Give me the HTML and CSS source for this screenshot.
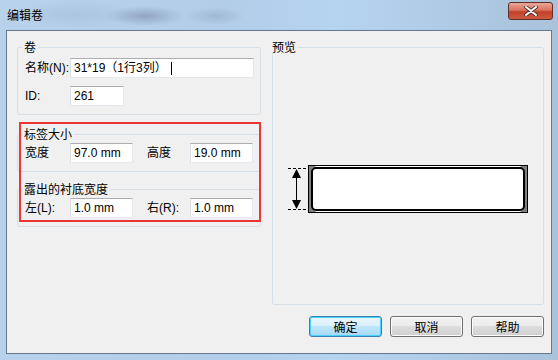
FILE: index.html
```html
<!DOCTYPE html>
<html lang="zh-CN">
<head>
    <meta charset="UTF-8">
    <title>编辑卷</title>
    <link rel="stylesheet" href="styles.css">
</head>
<body>
    <div class="window">
        <div class="titlebar">
            <span class="title">编辑卷</span>
            <div class="close-btn">
                <svg width="14" height="10" viewBox="0 0 14 10">
                    <path d="M2 1 L12 9 M12 1 L2 9" stroke="#4a2a26" stroke-width="3.6" stroke-linecap="round"/>
                    <path d="M2 1 L12 9 M12 1 L2 9" stroke="#ffffff" stroke-width="2" stroke-linecap="round"/>
                </svg>
            </div>
        </div>
        <div class="client">
            <div class="panes">
                <div class="left-col">
                    <fieldset class="group group-roll">
                        <legend>卷</legend>
                        <div class="row">
                            <span class="label">名称(N):</span>
                            <div class="field field-wide">31*19（1行3列）<span class="caret"></span></div>
                        </div>
                        <div class="row">
                            <span class="label">ID:</span>
                            <div class="field field-short">261</div>
                        </div>
                    </fieldset>

                    <div class="marked">
                        <fieldset class="group group-size">
                            <legend>标签大小</legend>
                            <div class="row">
                                <span class="label">宽度</span>
                                <div class="field">97.0 mm</div>
                                <span class="label label-second">高度</span>
                                <div class="field">19.0 mm</div>
                            </div>
                        </fieldset>
                        <fieldset class="group group-size">
                            <legend>露出的衬底宽度</legend>
                            <div class="row">
                                <span class="label">左(L):</span>
                                <div class="field">1.0 mm</div>
                                <span class="label label-second">右(R):</span>
                                <div class="field">1.0 mm</div>
                            </div>
                        </fieldset>
                    </div>
                </div>

                <fieldset class="group preview">
                    <legend>预览</legend>
                    <svg class="preview-svg" width="244" height="52" viewBox="286 163 244 52">
                        <!-- height marker -->
                        <line x1="288" y1="168.5" x2="308" y2="168.5" stroke="#000" stroke-dasharray="3 2"/>
                        <line x1="288" y1="209.5" x2="308" y2="209.5" stroke="#000" stroke-dasharray="3 2"/>
                        <line x1="296.5" y1="176" x2="296.5" y2="201" stroke="#000"/>
                        <polygon points="296.5,169 292,178 301,178" fill="#000"/>
                        <polygon points="296.5,209 292,200 301,200" fill="#000"/>
                        <!-- liner -->
                        <rect x="308.5" y="165.5" width="219" height="47" fill="#ffffff" stroke="#000"/>
                        <rect x="309" y="166" width="3" height="46" fill="#808080"/>
                        <rect x="524" y="166" width="3" height="46" fill="#808080"/>
                        <polygon points="312,166 316,166 312,170" fill="#808080"/>
                        <polygon points="312,212 316,212 312,208" fill="#808080"/>
                        <polygon points="524,166 520,166 524,170" fill="#808080"/>
                        <polygon points="524,212 520,212 524,208" fill="#808080"/>
                        <!-- label -->
                        <rect x="312" y="168" width="212" height="42" rx="4" fill="#ffffff" stroke="#000" stroke-width="2"/>
                    </svg>
                </fieldset>
            </div>

            <div class="buttons">
                <button class="btn btn-default">确定</button>
                <button class="btn">取消</button>
                <button class="btn">帮助</button>
            </div>
        </div>
    </div>
</body>
</html>
```

FILE: styles.css
```css
/* styles.css */
body {
    margin: 0;
    padding: 0;
    font-family: "Liberation Sans", "Noto Sans CJK SC", sans-serif;
    font-size: 12px;
    color: #000;
}

.window {
    width: 558px;
    height: 360px;
    background: linear-gradient(90deg, #b9d2eb 0%, #b3cde8 40%, #b6d3f0 60%, #aac2da 100%);
    box-sizing: border-box;
    display: flex;
    flex-direction: column;
}

.titlebar {
    height: 30px;
    display: flex;
    justify-content: space-between;
    align-items: flex-start;
    background:
        radial-gradient(ellipse 40px 10px at 145px 16px, rgba(80, 90, 110, 0.35), transparent),
        radial-gradient(ellipse 30px 9px at 215px 16px, rgba(110, 120, 140, 0.25), transparent),
        radial-gradient(ellipse 60px 14px at 75px 14px, rgba(140, 160, 185, 0.25), transparent);
}

.title {
    margin: 8px 0 0 7px;
    line-height: 14px;
    font-family: "Noto Sans CJK SC", sans-serif;
}

.close-btn {
    width: 45px;
    height: 18px;
    margin: 2px 5px 0 0;
    box-sizing: border-box;
    border: 1px solid #5b2e26;
    border-radius: 3px;
    background: linear-gradient(180deg, #e9a99a 0%, #d9715d 45%, #c3412a 55%, #cc5a3f 100%);
    display: flex;
    justify-content: center;
    align-items: center;
}

.client {
    flex: 1;
    margin: 0 6px 6px 6px;
    background-color: #f0f0f0;
    border: 1px solid #64798f;
    padding: 10px 7px 0 10px;
    display: flex;
    flex-direction: column;
}

.panes {
    display: flex;
    gap: 11px;
}

.left-col {
    width: 244px;
    display: flex;
    flex-direction: column;
}

.group {
    margin: 0;
    border: 1px solid #d5dfe5;
    border-radius: 3px;
    padding: 5px 6px 8px 7px;
}

.group legend {
    padding: 0 2px;
    margin-left: -3px;
    line-height: 12px;
    font-family: "Noto Sans CJK SC", sans-serif;
}

.group-size {
    padding-top: 3px;
}

.group-roll .row + .row {
    margin-top: 8px;
}

.row {
    display: flex;
    align-items: center;
}

.label {
    width: 45px;
    line-height: 14px;
}

.label-second {
    width: 43px;
    margin-left: 14px;
}

.field {
    width: 63px;
    height: 20px;
    box-sizing: border-box;
    background-color: #fff;
    border: 1px solid #e3e9ef;
    border-top-color: #abadb3;
    border-left-color: #dbdfe6;
    padding: 0 3px;
    line-height: 18px;
    white-space: nowrap;
    display: flex;
    align-items: center;
}

.field-wide {
    width: 184px;
}

.field-short {
    width: 54px;
}

.caret {
    width: 1px;
    height: 13px;
    background-color: #000;
    margin-left: 4px;
}

.marked {
    position: relative;
    margin-top: 13px;
    display: flex;
    flex-direction: column;
}

.marked::after {
    content: "";
    position: absolute;
    left: 2px;
    top: -6px;
    width: 242px;
    height: 100px;
    box-sizing: border-box;
    border: 2px solid #ee3535;
}

.marked .group + .group {
    margin-top: 11px;
}

.preview {
    flex: 1;
    height: 264px;
    box-sizing: border-box;
    padding: 0;
    display: flex;
    justify-content: center;
}

.preview-svg {
    margin-top: 110px;
    display: block;
}

.buttons {
    display: flex;
    justify-content: flex-end;
    gap: 8px;
    margin-top: 11px;
}

.btn {
    width: 73px;
    height: 21px;
    padding: 0;
    font-family: "Noto Sans CJK SC", sans-serif;
    font-size: 12px;
    color: #000;
    border: 1px solid #707070;
    border-radius: 3px;
    background: linear-gradient(180deg, #f2f2f2 0%, #ebebeb 49%, #dddddd 50%, #cfcfcf 100%);
    box-shadow: inset 0 0 0 1px #fcfcfc;
}

.btn-default {
    border-color: #3c7fb1;
    background: linear-gradient(180deg, #eaf6fd 0%, #d9f0fc 49%, #bee6fd 50%, #a7d9f5 100%);
    box-shadow: inset 0 0 0 1px #48d2fb;
}
```
